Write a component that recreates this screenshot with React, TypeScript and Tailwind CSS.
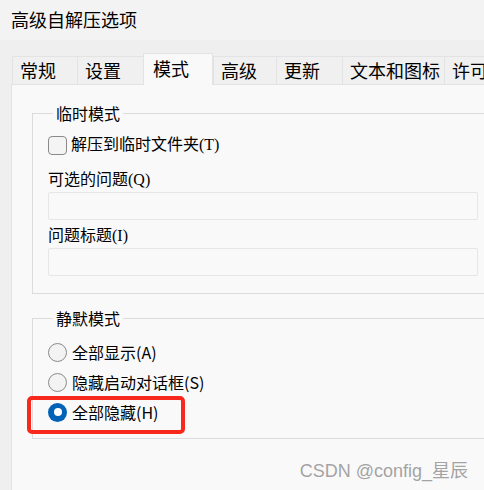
import React from 'react';

const uiFont = { fontFamily: '"Noto Sans CJK SC", "Noto Sans", sans-serif' };
const serifMix = { fontFamily: '"Liberation Serif", "Noto Sans CJK SC", serif' };

const tabs = [
  { label: '常规', w: 'w-[65px]' },
  { label: '设置', w: 'w-[66px]' },
  { label: '模式', w: 'w-[70px]', active: true },
  { label: '高级', w: 'w-[63px]' },
  { label: '更新', w: 'w-[66px]' },
  { label: '文本和图标', w: 'w-[102px]' },
  { label: '许可', w: 'w-[60px]' },
];

function Checkbox() {
  return (
    <span className="w-[19px] h-[19px] rounded-[4px] border border-[#8a8a8a] bg-[#f4f4f4] shrink-0" />
  );
}

function Radio({ checked }: { checked?: boolean }) {
  if (checked) {
    return (
      <span className="w-[19px] h-[19px] rounded-full bg-[#0063b8] flex items-center justify-center shrink-0">
        <span className="w-[8px] h-[8px] rounded-full bg-white" />
      </span>
    );
  }
  return <span className="w-[19px] h-[19px] rounded-full border border-[#8a8a8a] bg-[#f3f3f3] shrink-0" />;
}

export default function App() {
  return (
    <div
      className="relative w-[484px] h-[490px] overflow-hidden bg-[#efefef] text-black flex flex-col"
      style={uiFont}
    >
      {/* Title */}
      <div className="h-[40px] bg-[#f3f3f3] px-[11px] flex items-center text-[18px] leading-[24px] pb-[2px]">
        高级自解压选项
      </div>

      {/* Tabs */}
      <div className="h-[44px] pl-[12px] flex items-end whitespace-nowrap">
        {tabs.map((t) =>
          t.active ? (
            <div
              key={t.label}
              className={`${t.w} h-[32px] -mb-px relative z-10 bg-[#f9f9f9] border border-b-0 border-[#e3e3e3] pl-[9px] pt-[2px] text-[18px] leading-[24px] shrink-0`}
            >
              {t.label}
            </div>
          ) : (
            <div
              key={t.label}
              className={`${t.w} h-[28px] bg-[#f0f0f0] border-t border-l border-[#e3e3e3] pl-[7px] pt-[1px] text-[18px] leading-[24px] shrink-0`}
            >
              {t.label}
            </div>
          )
        )}
      </div>

      {/* Panel */}
      <div className="ml-[11px] flex-1 bg-[#f9f9f9] border-l border-t border-[#e3e3e3] pt-[18px] pl-[20px]">
        {/* 临时模式 */}
        <fieldset className="w-[470px] border border-[#dcdcdc] pl-[15px] pb-[17px]">
          <legend className="ml-[5px] px-[3px] text-[16px] leading-[20px]">临时模式</legend>
          <div className="mt-[12px] h-[20px] flex items-center gap-[4px]">
            <Checkbox />
            <span className="text-[16px] leading-[20px]" style={serifMix}>
              解压到临时文件夹(T)
            </span>
          </div>
          <div className="mt-[15px] h-[20px] text-[16px] leading-[20px]" style={serifMix}>
            可选的问题(Q)
          </div>
          <div className="mt-[2px] w-[430px] h-[28px] border border-[#e6e6e6] rounded-[2px] bg-[#f9f9f9]" />
          <div className="mt-[6px] h-[20px] text-[16px] leading-[20px]" style={serifMix}>
            问题标题(I)
          </div>
          <div className="mt-[2px] w-[430px] h-[28px] border border-[#e6e6e6] rounded-[2px] bg-[#f9f9f9]" />
        </fieldset>

        {/* 静默模式 */}
        <fieldset className="mt-[14px] w-[470px] border border-[#dcdcdc] pl-[15px] pb-[16px]">
          <legend className="ml-[5px] px-[3px] text-[16px] leading-[20px]">静默模式</legend>
          <div className="mt-[14px] flex flex-col gap-[10px] text-[16px] leading-[20px]">
            <div className="h-[20px] flex items-center gap-[5px]">
              <Radio />
              <span>全部显示(A)</span>
            </div>
            <div className="h-[20px] flex items-center gap-[5px]">
              <Radio />
              <span>隐藏启动对话框(S)</span>
            </div>
            <div className="relative h-[20px] flex items-center gap-[5px]">
              <Radio checked />
              <span>全部隐藏(H)</span>
              {/* annotation box */}
              <div className="absolute -left-[21px] -top-[6px] w-[158px] h-[38px] border-[4px] border-[#f8281c] rounded-[5px]" />
            </div>
          </div>
        </fieldset>
      </div>

      {/* watermark */}
      <div
        className="absolute right-[16px] bottom-[9px] text-[18px] leading-[20px] text-[#a3a3a3] whitespace-nowrap"
        style={{ fontFamily: '"Liberation Sans", "Noto Sans CJK SC", sans-serif', textShadow: '0 0 1px #fff' }}
      >
        CSDN @config_星辰
      </div>
    </div>
  );
}
